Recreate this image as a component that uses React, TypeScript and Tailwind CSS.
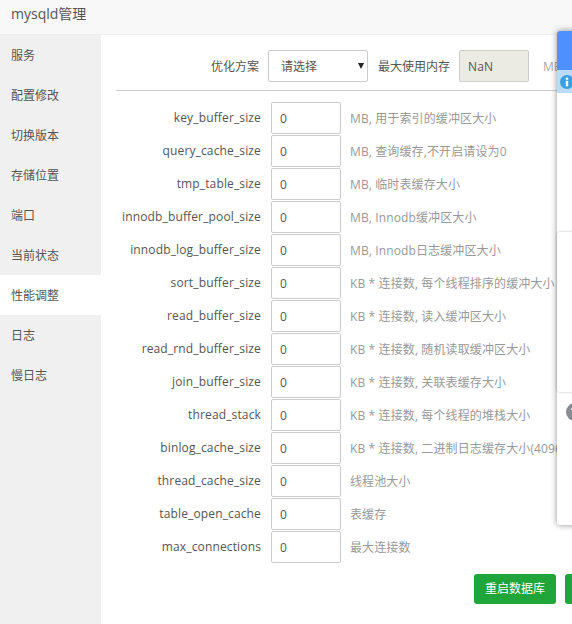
const font = { fontFamily: '"Open Sans","Noto Sans CJK SC",sans-serif' };

const nav = ['服务', '配置修改', '切换版本', '存储位置', '端口', '当前状态', '性能调整', '日志', '慢日志'];

const rows: [string, string][] = [
  ['key_buffer_size', 'MB, 用于索引的缓冲区大小'],
  ['query_cache_size', 'MB, 查询缓存,不开启请设为0'],
  ['tmp_table_size', 'MB, 临时表缓存大小'],
  ['innodb_buffer_pool_size', 'MB, Innodb缓冲区大小'],
  ['innodb_log_buffer_size', 'MB, Innodb日志缓冲区大小'],
  ['sort_buffer_size', 'KB * 连接数, 每个线程排序的缓冲大小'],
  ['read_buffer_size', 'KB * 连接数, 读入缓冲区大小'],
  ['read_rnd_buffer_size', 'KB * 连接数, 随机读取缓冲区大小'],
  ['join_buffer_size', 'KB * 连接数, 关联表缓存大小'],
  ['thread_stack', 'KB * 连接数, 每个线程的堆栈大小'],
  ['binlog_cache_size', 'KB * 连接数, 二进制日志缓存大小(4096的倍数)'],
  ['thread_cache_size', '线程池大小'],
  ['table_open_cache', '表缓存'],
  ['max_connections', '最大连接数'],
];

export default function App() {
  return (
    <div className="relative w-[572px] h-[624px] overflow-hidden bg-white text-[12px] text-[#555]" style={font}>
      <div className="h-[35px] bg-[#f8f8f8] border-b border-[#eee] pl-[11px] text-[14px] leading-[28px] text-[#555]">mysqld管理</div>
      <div className="flex h-[589px]">
        <div className="w-[101px] shrink-0 bg-[#f0f0f0]">
          {nav.map((n) => (
            <div key={n} className={`h-[40px] pl-[11px] leading-[42px] ${n === '性能调整' ? 'bg-white' : ''}`}>{n}</div>
          ))}
        </div>
        <div className="flex-1 min-w-0 pl-[15px] pt-[15px]">
          <div className="h-[41px] w-[520px] border-b border-[#ccc] flex items-start whitespace-nowrap">
            <span className="w-[143px] text-right leading-[33px]">优化方案</span>
            <div className="relative ml-[9px] w-[100px] h-[32px] border border-[#ccc] rounded-[2px] pl-[12px] leading-[31px] text-[#555]">
              请选择
              <span className="absolute right-[3px] top-[12px] w-0 h-0 border-x-[3.5px] border-x-transparent border-t-[6px] border-t-[#222]"></span>
            </div>
            <span className="ml-[10px] leading-[33px]">最大使用内存</span>
            <div className="ml-[9px] w-[70px] h-[32px] border border-[#ccc] rounded-[2px] bg-[#ebebe4] pl-[8px] leading-[31px] tracking-[0.2px]">NaN</div>
            <span className="ml-[14px] leading-[33px] text-[#aaa]">MB</span>
          </div>
          <div className="mt-[11px]">
            {rows.map(([k, h]) => (
              <div key={k} className="flex h-[33px] whitespace-nowrap">
                <span className="w-[145px] shrink-0 text-right leading-[32px] tracking-[0.14px]">{k}</span>
                <div className="ml-[10px] w-[70px] h-[32px] shrink-0 border border-[#ccc] rounded-[2px] pl-[8px] leading-[31px]">0</div>
                <span className="ml-[9px] shrink-0 leading-[33px] tracking-[0.12px] text-[#999]">{h}</span>
              </div>
            ))}
          </div>
          <div className="mt-[10px] ml-[358px] flex gap-[9px]">
            <div className="w-[82px] h-[30px] shrink-0 rounded-[3px] bg-[#20a53a] text-white text-center leading-[30px]">重启数据库</div>
            <div className="w-[82px] h-[30px] shrink-0 rounded-[3px] bg-[#20a53a]"></div>
          </div>
        </div>
      </div>
      <div className="absolute left-[557px] top-[31px] w-[30px] h-[494px] bg-white rounded-[3px] shadow-[0_0_6px_rgba(0,0,0,0.45)] overflow-hidden">
        <div className="h-[39px] bg-[#4d90fe]"></div>
        <div className="h-[23px] bg-[#bbdaf5] flex items-center pl-[3px]">
          <svg width="14" height="14" viewBox="0 0 14 14" className="shrink-0">
            <circle cx="7" cy="7" r="7" fill="#3a9fe0" />
            <rect x="5.8" y="2.6" width="2.4" height="2.2" fill="#fff" />
            <rect x="5.8" y="5.8" width="2.4" height="5.6" fill="#fff" />
          </svg>
        </div>
      </div>
      <div className="absolute left-[557px] top-[232px] w-[30px] h-[160px] bg-white rounded-[3px] shadow-[0_0_3px_rgba(0,0,0,0.25)]"></div>
      <svg className="absolute left-[566px] top-[403px]" width="18" height="18" viewBox="0 0 18 18">
        <circle cx="9" cy="9" r="9" fill="#8a8a94" />
        <path d="M6 7a3 3 0 1 1 4.4 2.6c-1 .5-1.4 1-1.4 2M9 13v1.8" stroke="#fff" strokeWidth="1.8" fill="none" />
      </svg>
    </div>
  );
}
